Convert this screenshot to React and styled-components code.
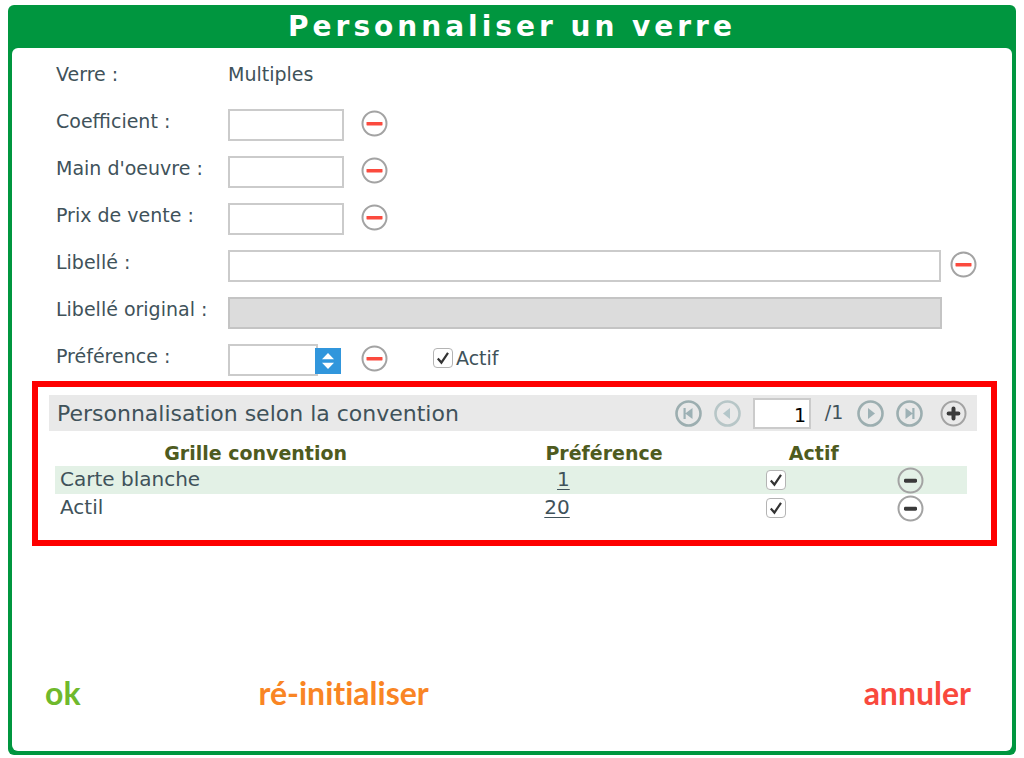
import React, { useState } from 'react'
import styled, { createGlobalStyle } from 'styled-components'

const GlobalStyle = createGlobalStyle`
   * {
      box-sizing: border-box;
   }

   body {
      margin: 0;
      background: #fff;
      color: #40525a;
      font-family: Verdana, 'DejaVu Sans', sans-serif;
      font-size: 19px;
      line-height: 24px;
   }

   button,
   input,
   select {
      font: inherit;
      color: inherit;
   }
`

const Dialog = styled.form`
   display: flex;
   flex-direction: column;
   min-height: calc(100vh - 8px);
   margin: 5px 8px 3px;
   padding: 0 4px 4px;
   background: #00963f;
   border-radius: 6px;
`

const Title = styled.h1`
   margin: 0;
   color: #fff;
   font-size: 28px;
   line-height: 43px;
   letter-spacing: 4px;
   text-align: center;
`

const Body = styled.div`
   flex: 1;
   display: flex;
   flex-direction: column;
   background: #fff;
   border-radius: 6px;
`

const Fields = styled.div`
   display: flex;
   flex-direction: column;
   gap: 15px;
   padding: 14px 35px 5px 44px;
`

const Row = styled.div`
   display: grid;
   grid-template-columns: 172px 1fr;
   min-height: 32px;
`

const Controls = styled.div`
   display: flex;
   align-items: center;
   gap: ${props => (props.$wide ? '9px' : '17px')};
   padding-right: ${props => (props.$reserve ? '35px' : '0')};
`

const TextInput = styled.input`
   width: 116px;
   flex: ${props => (props.$grow ? '1' : 'none')};
   height: 32px;
   padding: 0 4px;
   border: 2px solid #cbcbcb;
   border-radius: 0;
   background: #fff;
   outline: none;

   &:disabled {
      background: #dcdcdc;
      border-color: #c4c4c4;
   }
`

const IconButton = styled.button`
   flex: none;
   display: flex;
   padding: 0;
   border: 0;
   background: none;
   cursor: pointer;

   svg {
      display: block;
   }
`

const FieldButton = styled(IconButton)`
   padding-bottom: 4px;
`

const SelectBox = styled.div`
   position: relative;
   width: 116px;
   height: 32px;

   select {
      appearance: none;
      width: 90px;
      height: 32px;
      padding: 0 4px;
      border: 2px solid #cbcbcb;
      border-radius: 0;
      background: #fff;
      outline: none;
   }

   svg {
      position: absolute;
      top: 4px;
      right: 3px;
      pointer-events: none;
   }
`

const CheckLabel = styled.label`
   display: flex;
   align-items: center;
   gap: 3px;
   margin-left: 28px;
   padding-bottom: 4px;
`

const CheckBox = styled.span`
   position: relative;
   display: block;
   width: 20px;
   height: 20px;

   input {
      appearance: none;
      display: block;
      width: 20px;
      height: 20px;
      margin: 0;
      border: 1px solid #b4b4b4;
      border-radius: 4px;
      background: #fff;
   }

   svg {
      position: absolute;
      top: 0;
      left: 0;
      display: none;
      pointer-events: none;
   }

   input:checked + svg {
      display: block;
   }
`

const Frame = styled.section`
   margin: 0 15px 0 20px;
   padding: 8px 14px 18px 11px;
   border: 6px solid #fe0000;
`

const Toolbar = styled.div`
   display: flex;
   align-items: center;
   height: 36px;
   padding: 0 10px 0 8px;
   background: #e9e9e9;

   h2 {
      flex: 1;
      margin: 0;
      padding-top: 2px;
      font-size: 22px;
      font-weight: normal;
   }
`

const Pager = styled.div`
   display: flex;
   align-items: center;
   gap: 12px;
   margin-right: 17px;
`

const PageInput = styled(TextInput)`
   align-self: flex-end;
   width: 58px;
   height: 31px;
   padding: 4px 3px 0;
   color: #000;
   text-align: right;
`

const PageCount = styled.span`
   min-width: 22px;
   padding-bottom: 2px;
   text-align: center;
`

const Table = styled.table`
   width: calc(100% - 16px);
   margin: 0 10px 0 6px;
   border-collapse: collapse;
   table-layout: fixed;
   font-size: 20px;

   th {
      height: 35px;
      padding: 8px 0 0;
      color: #4e5b1e;
      font-size: 19px;
   }

   td {
      height: 28px;
      padding: 0;
      line-height: 26px;
      vertical-align: top;
   }

   tbody tr:nth-child(odd) {
      background: #e3f1e6;
   }
`

const Col = styled.col`
   width: ${props => props.$width};
`

const NameCell = styled.td`
   &&& {
      padding-left: 5px;
   }
`

const LinkCell = styled.td`
   &&& {
      padding-right: 182px;
      text-align: right;
   }

   a {
      color: inherit;
      text-decoration-thickness: 1px;
      text-underline-offset: 3px;
   }
`

const ControlCell = styled.td`
   &&& {
      padding-left: ${props => props.$indent};
      vertical-align: middle;
   }
`

const Footer = styled.footer`
   display: flex;
   margin-top: auto;
   padding: 0 41px 38px 33px;
`

const Action = styled.button`
   padding: 0;
   border: 0;
   background: none;
   color: ${props => props.$color};
   font-family: Lato, sans-serif;
   font-size: 32px;
   font-weight: bold;
   font-variant-ligatures: none;
   line-height: 40px;
   cursor: pointer;

   &:nth-child(2) {
      margin-left: 178px;
   }

   &:last-child {
      margin-left: auto;
   }
`

const RoundIcon = ({ stroke = '#a3a3a3', width = 2, fill = 'none', children }) => (
   <svg width='27' height='27' viewBox='0 0 27 27'>
      <circle
         cx='13.5'
         cy='13.5'
         r='12'
         fill={fill}
         stroke={stroke}
         strokeWidth={width}
      />
      {children}
   </svg>
)

const ClearButton = ({ label }) => (
   <FieldButton type='button' aria-label={label}>
      <RoundIcon fill='#fff'>
         <rect x='5.5' y='12' width='16' height='3.4' rx='0.6' fill='#fb4a3e' />
      </RoundIcon>
   </FieldButton>
)

const RemoveButton = ({ label }) => (
   <IconButton type='button' aria-label={label}>
      <RoundIcon>
         <rect x='7' y='11.7' width='13' height='4' rx='1.4' fill='#3a3a3a' />
      </RoundIcon>
   </IconButton>
)

const PageButton = ({ label, path, faded }) => (
   <IconButton type='button' aria-label={label}>
      <RoundIcon stroke={faded ? '#b7c6c7' : '#9caeb0'} width={2.6}>
         <path d={path} fill={faded ? '#b3c6c9' : '#9db1b5'} />
      </RoundIcon>
   </IconButton>
)

const Check = props => (
   <CheckBox>
      <input type='checkbox' {...props} />
      <svg width='20' height='20' viewBox='0 0 20 20'>
         <path
            d='M4.8 10.6 L8.4 14.6 L15 4.8'
            fill='none'
            stroke='#333'
            strokeWidth='2.2'
         />
      </svg>
   </CheckBox>
)

const numericFields = [
   { id: 'coefficient', label: 'Coefficient' },
   { id: 'main-oeuvre', label: "Main d'oeuvre" },
   { id: 'prix-vente', label: 'Prix de vente' }
]

const conventions = [
   { name: 'Carte blanche', preference: 1 },
   { name: 'Actil', preference: 20 }
]

const App = () => {
   const [page, setPage] = useState('1')

   return (
      <>
         <GlobalStyle />
         <Dialog onSubmit={e => e.preventDefault()}>
            <Title>Personnaliser un verre</Title>
            <Body>
               <Fields>
                  <Row>
                     <span>Verre :</span>
                     <span>Multiples</span>
                  </Row>
                  {numericFields.map(({ id, label }) => (
                     <Row key={id}>
                        <label htmlFor={id}>{label} :</label>
                        <Controls>
                           <TextInput id={id} type='text' />
                           <ClearButton label={`Effacer ${label}`} />
                        </Controls>
                     </Row>
                  ))}
                  <Row>
                     <label htmlFor='libelle'>Libellé :</label>
                     <Controls $wide>
                        <TextInput id='libelle' type='text' $grow />
                        <ClearButton label='Effacer Libellé' />
                     </Controls>
                  </Row>
                  <Row>
                     <label htmlFor='libelle-original'>Libellé original :</label>
                     <Controls $wide $reserve>
                        <TextInput id='libelle-original' type='text' disabled $grow />
                     </Controls>
                  </Row>
                  <Row>
                     <label htmlFor='preference'>Préférence :</label>
                     <Controls>
                        <SelectBox>
                           <select id='preference'>
                              <option value='' />
                              <option value='1'>1</option>
                              <option value='20'>20</option>
                           </select>
                           <svg width='26' height='26' viewBox='0 0 26 26'>
                              <rect width='26' height='26' fill='#3196dc' />
                              <path
                                 d='M7 11.2 L13 5 L19 11.2 Z M7 14.8 L13 21 L19 14.8 Z'
                                 fill='#fff'
                              />
                           </svg>
                        </SelectBox>
                        <ClearButton label='Effacer Préférence' />
                        <CheckLabel>
                           <Check defaultChecked />
                           Actif
                        </CheckLabel>
                     </Controls>
                  </Row>
               </Fields>

               <Frame>
                  <Toolbar>
                     <h2>Personnalisation selon la convention</h2>
                     <Pager>
                        <PageButton
                           label='Première page'
                           path='M8.5 8 H10.7 V19 H8.5 Z M17.5 8 V19 L10.2 13.5 Z'
                        />
                        <PageButton
                           label='Page précédente'
                           path='M16 8 V19 L9 13.5 Z'
                           faded
                        />
                        <PageInput
                           type='text'
                           aria-label='Page'
                           value={page}
                           onChange={e => setPage(e.target.value)}
                        />
                        <PageCount>/1</PageCount>
                        <PageButton
                           label='Page suivante'
                           path='M11 8 V19 L18 13.5 Z'
                        />
                        <PageButton
                           label='Dernière page'
                           path='M18.5 8 H16.3 V19 H18.5 Z M9.5 8 V19 L16.8 13.5 Z'
                        />
                     </Pager>
                     <IconButton type='button' aria-label='Ajouter'>
                        <RoundIcon>
                           <path
                              d='M13.5 8.6 V18.4 M8.6 13.5 H18.4'
                              stroke='#3a3a3a'
                              strokeWidth='4'
                              strokeLinecap='round'
                           />
                        </RoundIcon>
                     </IconButton>
                  </Toolbar>
                  <Table>
                     <colgroup>
                        <Col $width='44%' />
                        <Col $width='32.4%' />
                        <Col $width='13.6%' />
                        <Col $width='10%' />
                     </colgroup>
                     <thead>
                        <tr>
                           <th>Grille convention</th>
                           <th>Préférence</th>
                           <th>Actif</th>
                           <th aria-label='Actions' />
                        </tr>
                     </thead>
                     <tbody>
                        {conventions.map(({ name, preference }) => (
                           <tr key={name}>
                              <NameCell>{name}</NameCell>
                              <LinkCell>
                                 <a href='#preference'>{preference}</a>
                              </LinkCell>
                              <ControlCell $indent='14px'>
                                 <Check defaultChecked aria-label={`${name} actif`} />
                              </ControlCell>
                              <ControlCell $indent='21px'>
                                 <RemoveButton label={`Supprimer ${name}`} />
                              </ControlCell>
                           </tr>
                        ))}
                     </tbody>
                  </Table>
               </Frame>

               <Footer>
                  <Action type='submit' $color='#6fb92c'>
                     ok
                  </Action>
                  <Action type='reset' $color='#f98524'>
                     ré-initialiser
                  </Action>
                  <Action type='button' $color='#f9493d'>
                     annuler
                  </Action>
               </Footer>
            </Body>
         </Dialog>
      </>
   )
}

export default App
